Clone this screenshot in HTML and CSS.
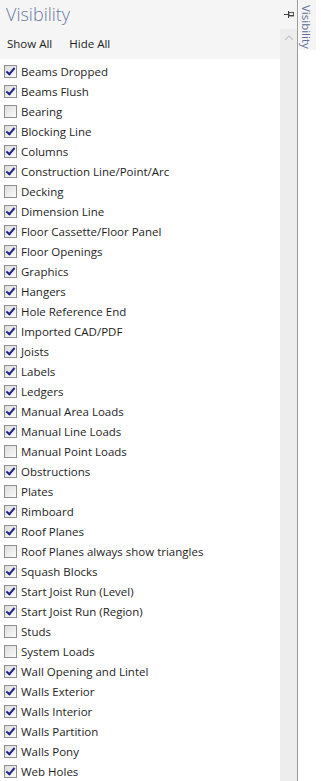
FILE: index.html
```html
<!DOCTYPE html>
<html lang="en">
  <head>
    <meta charset="UTF-8" />
    <meta name="viewport" content="width=device-width, initial-scale=1.0" />
    <title>Visibility</title>
    <link rel="stylesheet" href="styles.css">
  </head>
  <body>
    <div class="dock">
      <div class="panel">
        <div class="panel-header">
          <span class="panel-title">Visibility</span>
          <span class="pin">
            <svg width="10" height="8" viewBox="0 0 10 8">
              <rect x="0" y="3" width="4" height="1" fill="#444" />
              <rect x="4" y="0" width="1" height="7" fill="#444" />
              <rect x="5" y="1" width="5" height="4" fill="none" stroke="#444" stroke-width="1" transform="translate(0.5 0.5) scale(0.9)" />
              <rect x="5" y="4" width="5" height="1" fill="#444" />
            </svg>
          </span>
        </div>
        <div class="panel-body">
          <div class="content">
            <div class="toolbar">
              <a href="#" onclick="setAll(true)">Show All</a>
              <a href="#" onclick="setAll(false)">Hide All</a>
            </div>
            <ul class="layer-list" id="layer-list"></ul>
          </div>
          <div class="scrollbar">
            <svg width="10" height="6" viewBox="0 0 10 6">
              <polyline points="1,5 5,1 9,5" fill="none" stroke="#c8c8c8" stroke-width="1.2" />
            </svg>
          </div>
        </div>
      </div>
      <div class="side">
        <div class="side-tab">Visibility</div>
      </div>
    </div>
    <script>
      // lista de camadas: nome e se esta visivel
      const layers = [
        ["Beams Dropped", true],
        ["Beams Flush", true],
        ["Bearing", false],
        ["Blocking Line", true],
        ["Columns", true],
        ["Construction Line/Point/Arc", true],
        ["Decking", false],
        ["Dimension Line", true],
        ["Floor Cassette/Floor Panel", true],
        ["Floor Openings", true],
        ["Graphics", true],
        ["Hangers", true],
        ["Hole Reference End", true],
        ["Imported CAD/PDF", true],
        ["Joists", true],
        ["Labels", true],
        ["Ledgers", true],
        ["Manual Area Loads", true],
        ["Manual Line Loads", true],
        ["Manual Point Loads", false],
        ["Obstructions", true],
        ["Plates", false],
        ["Rimboard", true],
        ["Roof Planes", true],
        ["Roof Planes always show triangles", false],
        ["Squash Blocks", true],
        ["Start Joist Run (Level)", true],
        ["Start Joist Run (Region)", true],
        ["Studs", false],
        ["System Loads", false],
        ["Wall Opening and Lintel", true],
        ["Walls Exterior", true],
        ["Walls Interior", true],
        ["Walls Partition", true],
        ["Walls Pony", true],
        ["Web Holes", true],
      ];

      const list = document.getElementById("layer-list");

      layers.forEach(([name, on]) => {
        const li = document.createElement("li");
        li.innerHTML =
          '<label><span class="box' + (on ? " checked" : "") + '"></span>' + name + "</label>";
        li.querySelector(".box").addEventListener("click", (e) => {
          e.currentTarget.classList.toggle("checked");
        });
        list.appendChild(li);
      });

      function setAll(value) {
        document.querySelectorAll(".box").forEach((el) => {
          el.classList.toggle("checked", value);
        });
      }
    </script>
  </body>
</html>
```

FILE: styles.css
```css
body,
html {
  margin: 0;
  padding: 0;
}

body {
  font-family: "Open Sans", "Noto Sans", sans-serif;
  font-size: 11.5px;
  color: #1e1e1e;
  background-color: #f5f5f5;
  height: 781px;
  overflow: hidden;
}

.dock {
  display: flex;
  height: 781px;
}

.panel {
  width: 297px;
  display: flex;
  flex-direction: column;
  background-color: #f5f5f5;
  border-right: 1px solid #9a9a9a;
}

.panel-header {
  height: 29px;
  display: flex;
  align-items: flex-start;
  justify-content: space-between;
}

.panel-title {
  font-weight: 300;
  font-size: 18px;
  color: #6b7ba3;
  margin-left: 6px;
  line-height: 29px;
}

.pin {
  margin: 11px 3px 0 0;
  display: flex;
}

.panel-body {
  flex: 1;
  display: flex;
  min-height: 0;
}

.content {
  flex: 1;
  display: flex;
  flex-direction: column;
}

.toolbar {
  height: 33px;
  display: flex;
  align-items: center;
  gap: 17px;
  padding-left: 7px;
  padding-bottom: 1px;
  box-sizing: border-box;
}

.toolbar a {
  text-decoration: none;
  color: #1e1e1e;
}

.layer-list {
  flex: 1;
  list-style-type: none;
  margin: 0;
  padding: 2px 0 0 0;
  background-color: #ffffff;
}

.layer-list li {
  height: 20px;
  display: flex;
  align-items: center;
}

.layer-list label {
  display: flex;
  align-items: center;
  gap: 4px;
  padding-left: 4px;
}

.box {
  width: 11px;
  height: 11px;
  border: 1px solid #8e8f8f;
  background: linear-gradient(135deg, #dcdcdc, #fbfbfb);
  position: relative;
  cursor: pointer;
}

.box.checked::after {
  content: "";
  position: absolute;
  left: 3px;
  top: 0px;
  width: 3px;
  height: 7px;
  border-right: 2px solid #22228a;
  border-bottom: 2px solid #22228a;
  transform: rotate(40deg);
}

.scrollbar {
  width: 17px;
  background-color: #ededed;
  display: flex;
  justify-content: center;
  padding-top: 6px;
  box-sizing: border-box;
  align-items: flex-start;
}

.side {
  flex: 1;
  background-color: #ffffff;
  padding-left: 1px;
}

.side-tab {
  background-color: #f5f5f5;
  height: 50px;
  writing-mode: vertical-rl;
  font-size: 11.5px;
  color: #5d6e9a;
  padding-top: 5px;
  box-sizing: border-box;
  padding-right: 2px;
}
```
